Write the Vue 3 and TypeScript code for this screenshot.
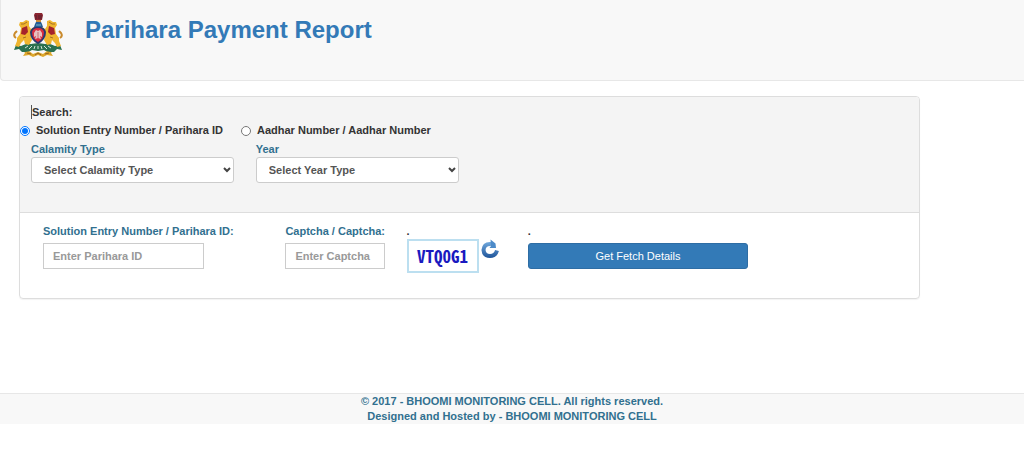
<script setup lang="ts">
import { ref } from 'vue'

type SearchMode = 'parihara' | 'aadhar'

const mode = ref<SearchMode>('parihara')
const calamity = ref('')
const year = ref('')
const entryId = ref('')
const captcha = ref('')
const captchaCode = ref('VTQ0G1')

const calamities: string[] = ['Flood', 'Drought', 'Hailstorm']
const years: string[] = ['2017', '2018', '2019', '2020']

function refreshCaptcha(): void {
  const letters = 'ABCDEFGHJKLMNPQRSTUVWXYZ0123456789'
  captchaCode.value = Array.from({ length: 6 }, () => letters[Math.floor(Math.random() * letters.length)]).join('')
}
</script>

<template>
  <div class="page">
    <header class="top">
      <svg class="emblem" viewBox="0 0 50 46" aria-label="Karnataka emblem" role="img">
        <!-- gold scroll -->
        <path d="M10 38 L16 39 L20 42 L25 40 L30 42 L34 39 L40 38 L38 41 L40 44 L34 43 L30 45 L25 43 L20 45 L16 43 L10 44 L12 41 Z" fill="#dda72c" />
        <path d="M14 41 L18 42 M22 43 L25 41 L28 43 M32 42 L36 41" fill="none" stroke="#98621f" stroke-width="1" />
        <!-- leafy base -->
        <path d="M1 38 L3 33 L8 34 Q14 31 18 32 L25 31 L32 32 Q36 31 42 34 L47 33 L49 38 L44 37 L41 40 Q34 40 31 38 L25 39 L19 38 Q16 40 9 40 L6 37 Z" fill="#2b7150" />
        <path d="M12 36 L15 34 M16 37 L19 34 M21 37 L22 34 M25 37 V34 M29 37 L28 34 M34 37 L31 34 M38 36 L35 34" stroke="#d8e5d9" stroke-width="1" />
        <!-- lions, mirrored around the shield -->
        <g v-for="side in [1, -1]" :key="side" :transform="side === 1 ? undefined : 'matrix(-1 0 0 1 50 0)'">
          <path d="M3 26 Q0 24 2 21 L4 19" fill="none" stroke="#c98a2c" stroke-width="2" />
          <path d="M7 10 L10 10 L13 8 L16 9 L16 14 L18 17 L21 15 L22 17 L18 20 L18 24 L19 28 L16 33 L12 32 L11 28 L8 31 L6 35 L2 34 L4 29 L4 26 L7 22 L8 16 L6 13 Z" fill="#efb52f" />
          <path d="M9 16 L14 14 L15 20 L12 23 L8 22 Z" fill="#a5232b" />
          <path d="M8 12 L11 12 L14 10 M10 26 L13 25" fill="none" stroke="#a67022" stroke-width="1" />
        </g>
        <!-- shield -->
        <path d="M25 14 Q32 15 33 20 Q33 28 25 32 Q17 28 17 20 Q18 15 25 14 Z" fill="#27396f" />
        <path d="M25 16 Q30 16 31 20 Q31 27 25 30 Q19 27 19 20 Q20 16 25 16 Z" fill="#d92d40" />
        <path d="M25 19 L27 18 L29 21 L29 25 L27 24 L28 27 L25 26 L22 27 L23 24 L21 25 L21 21 L23 18 Z" fill="#e7bfc0" />
        <path d="M25 20 V26" stroke="#c56a72" stroke-width="1" />
        <!-- capital -->
        <path d="M21 3 L22 1 H29 L30 3 L29 8 H22 Z" fill="#8b2530" />
        <path d="M23 3 V7 M26 3 V7 M28 3 V7" stroke="#56202f" stroke-width="1" />
        <path d="M23 8 H28 V10 H23 Z" fill="#cc8b38" />
        <path d="M23 10 H28 L29 12 L30 15 H21 L22 12 Z" fill="#265c93" />
        <path d="M23 13 H28" stroke="#75bcd0" stroke-width="1" />
      </svg>
      <h1>Parihara Payment Report</h1>
    </header>

    <form class="panel" @submit.prevent>
      <section class="panel-head">
        <p class="search">Search:</p>
        <div class="row modes">
          <label class="mode"><input v-model="mode" type="radio" name="mode" value="parihara" />Solution Entry Number / Parihara ID</label>
          <label class="mode"><input v-model="mode" type="radio" name="mode" value="aadhar" />Aadhar Number / Aadhar Number</label>
        </div>
        <div class="row">
          <div class="pick">
            <label for="calamity">Calamity Type</label>
            <div class="select-box">
              <select id="calamity" v-model="calamity">
                <option value="">Select Calamity Type</option>
                <option v-for="c in calamities" :key="c" :value="c">{{ c }}</option>
              </select>
              <svg class="chevron" viewBox="0 0 8 6" aria-hidden="true"><path d="M1 1 L4 4 L7 1" /></svg>
            </div>
          </div>
          <div class="pick">
            <label for="year">Year</label>
            <div class="select-box">
              <select id="year" v-model="year">
                <option value="">Select Year Type</option>
                <option v-for="y in years" :key="y" :value="y">{{ y }}</option>
              </select>
              <svg class="chevron" viewBox="0 0 8 6" aria-hidden="true"><path d="M1 1 L4 4 L7 1" /></svg>
            </div>
          </div>
        </div>
      </section>

      <section class="panel-body">
        <div class="field wide entry">
          <label for="entry">Solution Entry Number / Parihara ID:</label>
          <input id="entry" v-model="entryId" type="text" placeholder="Enter Parihara ID" />
        </div>
        <div class="field">
          <label for="captcha">Captcha / Captcha:</label>
          <input id="captcha" v-model="captcha" type="text" placeholder="Enter Captcha" />
        </div>
        <div class="field">
          <span class="dot">.</span>
          <div class="captcha">
            <span class="code">{{ captchaCode }}</span>
            <button class="refresh" type="button" aria-label="Refresh captcha" @click="refreshCaptcha">
              <svg viewBox="0 0 36 40" aria-hidden="true">
                <defs>
                  <linearGradient id="arrow" gradientUnits="userSpaceOnUse" x1="0" y1="2" x2="0" y2="38">
                    <stop offset="0" stop-color="#7ab2e4" />
                    <stop offset="1" stop-color="#1f559a" />
                  </linearGradient>
                </defs>
                <path d="M20 10 Q6 9 5 22 Q6 34 18 34 Q29 34 32 23" fill="none" stroke="url(#arrow)" stroke-width="8" />
                <path d="M19 1 L29 9 L30 18 L17 18 L20 14 Z" fill="#4d8bc9" />
              </svg>
            </button>
          </div>
        </div>
        <div class="field wide">
          <span class="dot">.</span>
          <button class="fetch" type="submit">Get Fetch Details</button>
        </div>
      </section>
    </form>

    <footer class="foot">
      <p>© 2017 - BHOOMI MONITORING CELL. All rights reserved.</p>
      <p>Designed and Hosted by - BHOOMI MONITORING CELL</p>
    </footer>
  </div>
</template>

<style>
body {
  background: #fff;
}
</style>

<style scoped>
.page,
.page * {
  box-sizing: border-box;
}
.page {
  font: bold 11px/15px "Liberation Sans", Arial, sans-serif;
  color: #333;
}
p,
h1 {
  margin: 0;
}
.top {
  display: flex;
  align-items: flex-start;
  gap: 22px;
  min-height: 81px;
  padding: 12px;
  background: #f8f8f8;
  border: 1px solid #e7e7e7;
  border-top: 0;
  border-right: 0;
  border-radius: 0 0 0 4px;
}
.emblem {
  width: 50px;
  height: 46px;
}
h1 {
  padding-top: 3px;
  font-size: 24px;
  line-height: 30px;
  color: #337ab7;
}
.panel {
  margin: 15px 104px 0 19px;
  border: 1px solid #ddd;
  border-radius: 4px;
  box-shadow: 0 1px 1px rgba(0, 0, 0, 0.05);
}
.panel-head {
  padding: 8px 11px 29px;
  background: #f4f4f4;
  border-bottom: 1px solid #ddd;
  border-radius: 3px 3px 0 0;
}
.row {
  display: grid;
  grid-template-columns: repeat(4, minmax(0, 1fr));
  column-gap: 22px;
}
.search {
  width: max-content;
  border-left: 1px solid #555;
  line-height: 14px;
}
.modes {
  column-gap: 16px;
  margin: 4px 20px 4px -11px;
}
.mode {
  display: flex;
  align-items: center;
  white-space: nowrap;
}
.mode input {
  width: 10px;
  height: 10px;
  margin: 0 6px 0 0;
}
.pick label,
.field label {
  display: block;
  color: #31708f;
  white-space: nowrap;
}
.select-box {
  display: grid;
  align-items: center;
}
.select-box > * {
  grid-area: 1 / 1;
}
select {
  appearance: none;
  width: 100%;
  height: 26px;
  padding: 0 12px;
  font: inherit;
  color: #555;
  background: #fff;
  border: 1px solid #ccc;
  border-radius: 3px;
}
.chevron {
  justify-self: end;
  width: 8px;
  height: 6px;
  margin-right: 3px;
  pointer-events: none;
}
.chevron path {
  fill: none;
  stroke: #444;
  stroke-width: 2;
}
.panel-body {
  display: grid;
  grid-template-columns: repeat(6, minmax(0, 1fr));
  column-gap: 22px;
  width: 81%;
  padding: 11px 0 29px 23px;
}
.wide {
  grid-column: span 2;
}
.field label,
.dot {
  display: block;
  margin-bottom: 4px;
}
.field input {
  width: 100%;
  height: 26px;
  padding: 0 9px;
  font: inherit;
  color: #555;
  border: 1px solid #ccc;
  border-radius: 0;
}
.entry input {
  width: 73%;
}
.field input::placeholder {
  color: #999;
}
.captcha {
  display: flex;
  align-items: flex-start;
  gap: 2px;
  margin: -4px 0;
}
.code {
  width: 72px;
  height: 34px;
  flex: none;
  font: bold 17px/30px "Liberation Sans Narrow", "Noto Sans Mono CJK JP", "DejaVu Sans Condensed", sans-serif;
  text-align: center;
  color: #1a1ac0;
  border: 2px solid #bcdff0;
}
.refresh {
  flex: none;
  padding: 0;
  background: none;
  border: 0;
}
.refresh svg {
  display: block;
  width: 18px;
  height: 20px;
}
.fetch {
  width: 100%;
  height: 26px;
  font: 11px/15px "Liberation Sans", Arial, sans-serif;
  color: #fff;
  background: #337ab7;
  border: 1px solid #2e6da4;
  border-radius: 3px;
}
.foot {
  margin-top: 94px;
  color: #31708f;
  text-align: center;
  background: #f8f8f8;
  border-top: 1px solid #e7e7e7;
}
</style>
